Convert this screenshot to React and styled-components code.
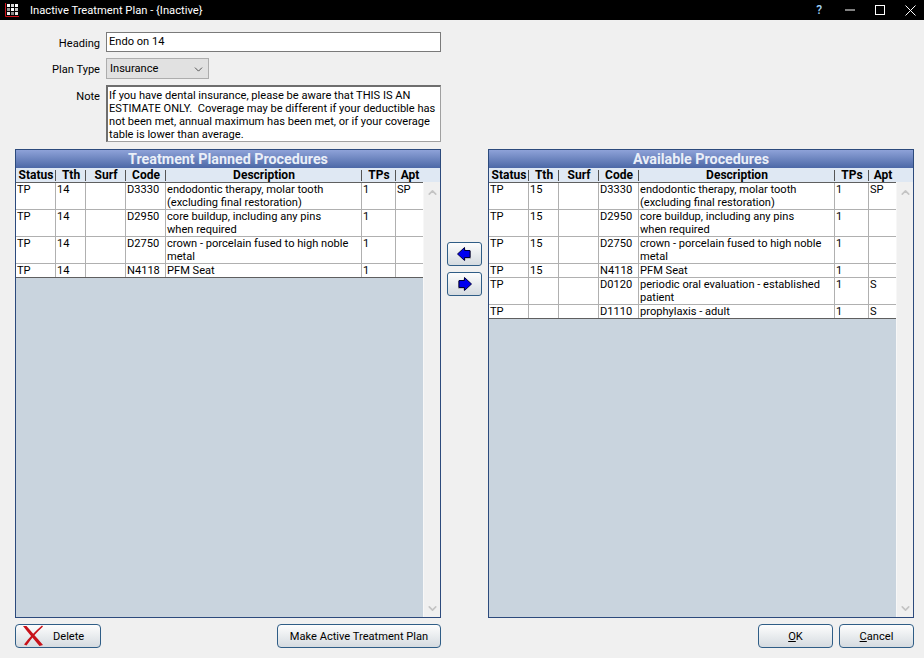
import React from 'react';
import styled, { createGlobalStyle } from 'styled-components';
import { ChevronDown, ChevronUp } from 'lucide-react';

const uiFont = 'Roboto, "Liberation Sans", sans-serif';

const leftRows = [
	['TP', '14', '', 'D3330', ['endodontic therapy, molar tooth', '(excluding final restoration)'], '1', 'SP'],
	['TP', '14', '', 'D2950', ['core buildup, including any pins', 'when required'], '1', ''],
	['TP', '14', '', 'D2750', ['crown - porcelain fused to high noble', 'metal'], '1', ''],
	['TP', '14', '', 'N4118', ['PFM Seat'], '1', ''],
];

const rightRows = [
	['TP', '15', '', 'D3330', ['endodontic therapy, molar tooth', '(excluding final restoration)'], '1', 'SP'],
	['TP', '15', '', 'D2950', ['core buildup, including any pins', 'when required'], '1', ''],
	['TP', '15', '', 'D2750', ['crown - porcelain fused to high noble', 'metal'], '1', ''],
	['TP', '15', '', 'N4118', ['PFM Seat'], '1', ''],
	['TP', '', '', 'D0120', ['periodic oral evaluation - established', 'patient'], '1', 'S'],
	['TP', '', '', 'D1110', ['prophylaxis - adult'], '1', 'S'],
];

const headers = ['Status', 'Tth', 'Surf', 'Code', 'Description', 'TPs', 'Apt'];
const gridColumns = '40px 30px 40px 40px 196px 34px 28px';

const iconSquares = [
	[1, 0, '#fff'], [5, 0, '#d8d8d8'], [9, 0, '#fff'],
	[1, 4, '#9a9a9a'], [5, 4, '#fff'], [9, 4, '#c4c4c4'],
	[1, 8, '#f0f0f0'], [5, 8, '#8a8a8a'], [9, 8, '#e8e8e8'],
];

const AppIcon = () => (
	<svg width="15" height="14" viewBox="0 0 15 14">
		<path d="M0.5 0V13.5H14" stroke="#d0121a" fill="none" />
		{iconSquares.map(([x, y, fill]) => (
			<rect key={`${x}-${y}`} x={x + 1} y={y + 1} width="3" height="3" fill={fill} />
		))}
	</svg>
);

const DeleteIcon = () => (
	<svg width="22" height="22" viewBox="0 0 22 22">
		<path d="M1 1 L4.5 1 C9 6 14 12 21 20 L17.5 21 C12 14 6 8 1 1Z" fill="#c8121a" />
		<path d="M20 0.5 L21 1.5 C15 7 9.5 13 4.5 20.5 L2 19.5 C7 13 13 6 20 0.5Z" fill="#c8121a" />
	</svg>
);

const ArrowIcon = ({ right }) => (
	<ArrowSvg $right={right} width="15" height="15" viewBox="0 0 15 15">
		<path d="M8.5 1.5 L2 7.5 L8.5 13.5 V11.5 H14 V4 H8.5Z" fill="#9a9a9a" />
		<path d="M7.5 0.5 L0.5 7 L7.5 13.5 V10.5 H13 V3.5 H7.5Z" fill="#0000f0" stroke="#00003a" strokeWidth="1" />
	</ArrowSvg>
);

const Grid = ({ title, rows }) => (
	<Panel>
		<PanelTitle>{title}</PanelTitle>
		<HeaderRow>
			{headers.map((h) => (
				<HeaderCell key={h}>{h}</HeaderCell>
			))}
		</HeaderRow>
		<PanelBody>
			<Rows>
				{rows.map((row, i) => (
					<Row key={i}>
						{row.map((cell, j) => (
							<Cell key={j}>
								{Array.isArray(cell) ? cell.map((line) => <div key={line}>{line}</div>) : cell}
							</Cell>
						))}
					</Row>
				))}
			</Rows>
			<ScrollBar>
				<ChevronUp size={13} strokeWidth={3} color="#c4c4c4" />
				<ChevronDown size={13} strokeWidth={3} color="#c4c4c4" />
			</ScrollBar>
		</PanelBody>
	</Panel>
);

const App = () => (
	<Window>
		<GlobalStyle />
		<TitleBar>
			<AppIcon />
			<TitleText>Inactive Treatment Plan - {'{Inactive}'}</TitleText>
			<TitleControls>
				<HelpMark>?</HelpMark>
				<svg width="10" height="2" viewBox="0 0 10 2">
					<path d="M0 1H10" stroke="#fff" />
				</svg>
				<svg width="10" height="10" viewBox="0 0 10 10">
					<rect x="0.5" y="0.5" width="9" height="9" fill="none" stroke="#fff" />
				</svg>
				<svg width="11" height="11" viewBox="0 0 11 11">
					<path d="M0.5 0.5L10.5 10.5M10.5 0.5L0.5 10.5" stroke="#fff" />
				</svg>
			</TitleControls>
		</TitleBar>
		<Content>
			<FormBlock>
				<FormRow>
					<FieldLabel>Heading</FieldLabel>
					<TextInput>Endo on 14</TextInput>
				</FormRow>
				<FormRow>
					<FieldLabel>Plan Type</FieldLabel>
					<Select>
						Insurance
						<ChevronDown size={13} strokeWidth={1.5} color="#333" />
					</Select>
				</FormRow>
				<FormRow>
					<FieldLabel>Note</FieldLabel>
					<NoteBox>
						<div>If you have dental insurance, please be aware that THIS IS AN</div>
						<div>ESTIMATE ONLY.&nbsp; Coverage may be different if your deductible has</div>
						<div>not been met, annual maximum has been met, or if your coverage</div>
						<div>table is lower than average.</div>
					</NoteBox>
				</FormRow>
			</FormBlock>
			<Panels>
				<Grid title="Treatment Planned Procedures" rows={leftRows} />
				<MoveColumn>
					<SmallButton>
						<ArrowIcon />
					</SmallButton>
					<SmallButton>
						<ArrowIcon right />
					</SmallButton>
				</MoveColumn>
				<Grid title="Available Procedures" rows={rightRows} />
			</Panels>
			<Footer>
				<FooterSide>
					<Button $width="86px" $icon>
						<DeleteIcon />
						<ButtonLabel>Delete</ButtonLabel>
					</Button>
					<Button $width="164px">Make Active Treatment Plan</Button>
				</FooterSide>
				<FooterEnd>
					<Button $width="75px">
						<Underlined>O</Underlined>K
					</Button>
					<Button $width="75px">
						<Underlined>C</Underlined>ancel
					</Button>
				</FooterEnd>
			</Footer>
		</Content>
	</Window>
);

export default App;

const GlobalStyle = createGlobalStyle`
	html, body {
		margin: 0;
		padding: 0;
		background: #f0f0f0;
	}
`;

const Window = styled.div`
	width: 924px;
	height: 658px;
	display: flex;
	flex-direction: column;
	background: #f0f0f0;
	font-family: ${uiFont};
	font-size: 11.1px;
	color: #000;
	overflow: hidden;
`;

const TitleBar = styled.div`
	height: 20px;
	flex: none;
	display: flex;
	align-items: center;
	gap: 10px;
	padding-left: 5px;
	background: #000;
	color: #fff;
`;

const TitleText = styled.span`
	font-size: 11.2px;
`;

const TitleControls = styled.div`
	margin-left: auto;
	display: flex;
	align-items: center;

	svg {
		margin-right: 20px;
	}
	svg:last-child {
		margin-right: 8px;
	}
`;

const HelpMark = styled.span`
	color: #9ed0f5;
	font-size: 12px;
	font-weight: 500;
	margin-right: 23px;
`;

const Content = styled.div`
	flex: 1;
	display: flex;
	flex-direction: column;
	padding: 12px 10px 10px 15px;
	min-height: 0;
`;

const FormBlock = styled.div`
	display: flex;
	flex-direction: column;
	gap: 6px;
`;

const FormRow = styled.div`
	display: flex;
	align-items: flex-start;
	gap: 6px;
`;

const FieldLabel = styled.div`
	width: 85px;
	text-align: right;
	padding-top: 4px;
	line-height: 15px;
`;

const TextInput = styled.div`
	box-sizing: border-box;
	width: 335px;
	height: 20px;
	border: 1px solid #7a7a7a;
	background: #fff;
	padding: 0 2px;
	line-height: 18px;
`;

const Select = styled.div`
	box-sizing: border-box;
	width: 103px;
	height: 21px;
	border: 1px solid #adadad;
	background: #e1e1e1;
	padding: 1px 3px 0;
	line-height: 18px;
	display: flex;
	align-items: center;
	justify-content: space-between;
`;

const NoteBox = styled.div`
	box-sizing: border-box;
	width: 335px;
	height: 57px;
	border: 1px solid #a0a0a0;
	border-top: 2px solid #6e6e6e;
	border-left: 2px solid #6e6e6e;
	background: #fff;
	padding: 2px 0 0 1px;
	line-height: 13px;
	white-space: nowrap;
	overflow: hidden;
`;

const Panels = styled.div`
	flex: 1;
	min-height: 0;
	display: flex;
	margin-top: 7px;
`;

const Panel = styled.section`
	box-sizing: border-box;
	width: 426px;
	display: flex;
	flex-direction: column;
	border: 1px solid #2c4a7c;
`;

const PanelTitle = styled.div`
	height: 18px;
	flex: none;
	background: linear-gradient(#8ea2d8, #4c68a6);
	color: #eaeff8;
	font-size: 14.3px;
	font-weight: 700;
	text-align: center;
	line-height: 19px;
`;

const HeaderRow = styled.div`
	display: grid;
	grid-template-columns: ${gridColumns};
	height: 14px;
	flex: none;
	background: #dfe8f3;
`;

const HeaderCell = styled.div`
	position: relative;
	text-align: center;
	font-weight: 700;
	line-height: 14px;
	font-size: 12px;

	&::after {
		content: '';
		position: absolute;
		top: 2px;
		bottom: 1px;
		right: 0;
		width: 1px;
		background: #555;
	}
	&:last-child::after {
		display: none;
	}
`;

const PanelBody = styled.div`
	flex: 1;
	min-height: 0;
	display: flex;
`;

const Rows = styled.div`
	flex: 1;
	min-width: 0;
	background: #c9d4de;
	border-top: 1px solid #5f5f5f;
`;

const Row = styled.div`
	display: grid;
	grid-template-columns: ${gridColumns};
	background: #fff;
	border-bottom: 1px solid #b0b0b0;

	&:last-child {
		border-bottom-color: #5f5f5f;
	}
`;

const Cell = styled.div`
	box-sizing: border-box;
	padding-left: 1px;
	border-right: 1px solid #b0b0b0;
	line-height: 13px;
	white-space: nowrap;
	overflow: hidden;
`;

const ScrollBar = styled.div`
	width: 17px;
	flex: none;
	background: #f0f0f0;
	border-left: 1px solid #f7f7f7;
	box-sizing: border-box;
	display: flex;
	flex-direction: column;
	justify-content: space-between;
	align-items: center;
	padding: 4px 0 2px;
`;

const MoveColumn = styled.div`
	width: 47px;
	flex: none;
	display: flex;
	flex-direction: column;
	align-items: center;
	gap: 6px;
	padding-top: 93px;
`;

const SmallButton = styled.button`
	box-sizing: border-box;
	width: 35px;
	height: 24px;
	padding: 0;
	border: 1px solid #2f5d86;
	border-radius: 3px;
	background: linear-gradient(#fdfdfd, #d5dbe0);
	display: flex;
	align-items: center;
	justify-content: center;
`;

const ArrowSvg = styled.svg`
	transform: ${(p) => (p.$right ? 'scaleX(-1)' : 'none')};
`;

const Footer = styled.div`
	display: flex;
	justify-content: space-between;
	margin-top: 6px;
`;

const FooterSide = styled.div`
	width: 426px;
	display: flex;
	justify-content: space-between;
`;

const FooterEnd = styled.div`
	display: flex;
	gap: 6px;
`;

const Button = styled.button`
	box-sizing: border-box;
	width: ${(p) => p.$width};
	height: 24px;
	padding: ${(p) => (p.$icon ? '0 0 0 6px' : '0')};
	border: 1px solid #2f5d86;
	border-radius: 4px;
	background: linear-gradient(#fdfdfd, #d5dbe0);
	font-family: ${uiFont};
	font-size: 11.1px;
	color: #000;
	display: flex;
	align-items: center;
	justify-content: ${(p) => (p.$icon ? 'flex-start' : 'center')};
`;

const ButtonLabel = styled.span`
	margin-left: 9px;
`;

const Underlined = styled.span`
	text-decoration: underline;
`;
